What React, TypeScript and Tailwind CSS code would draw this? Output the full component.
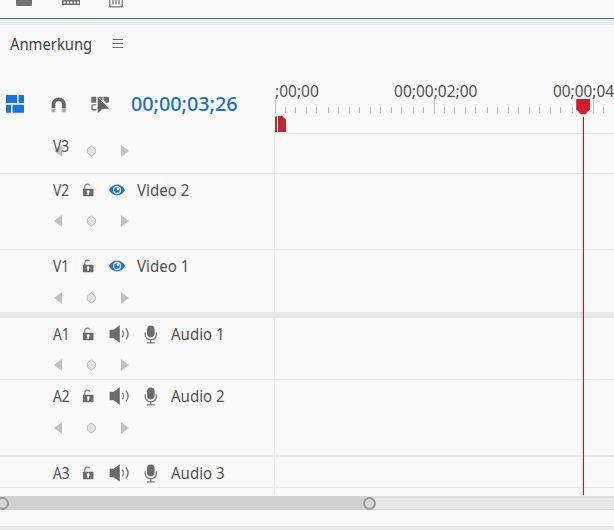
import clsx from "clsx";

const FONT = "font-['Noto_Sans','Open_Sans',sans-serif]";

// distance to the next tick over one two second span
const TICK_GAPS = [10, 10, 11, 10, 12, 10, 11, 10, 11, 10, 11, 10, 12, 10, 11];
const TICKS = [...TICK_GAPS, ...TICK_GAPS, 10, 11];

type Track = {
  id: string;
  name?: string;
  kind: "video" | "audio";
  row: string;
  keys?: string;
};

const TRACKS: Track[] = [
  { id: "V3", kind: "video", row: "h-10 border-b", keys: "-mt-[13px]" },
  { id: "V2", name: "Video 2", kind: "video", row: "h-[76px] border-b", keys: "mt-[9px]" },
  { id: "V1", name: "Video 1", kind: "video", row: "h-[68px] border-b-[6px]", keys: "mt-[10px]" },
  { id: "A1", name: "Audio 1", kind: "audio", row: "h-[62px] border-b", keys: "mt-[9px]" },
  { id: "A2", name: "Audio 2", kind: "audio", row: "h-[77px] border-b-2", keys: "mt-[10px]" },
  { id: "A3", name: "Audio 3", kind: "audio", row: "h-[31px] border-b" },
];

function LockIcon() {
  return (
    <svg width="12" height="14" viewBox="0 0 12 14" className="shrink-0">
      <path d="M2.8 6V3.8a2.6 2.6 0 0 1 4.9-1.3" fill="none" stroke="#808080" strokeWidth="1.3" />
      <rect x="0.9" y="5.7" width="10.6" height="7.6" rx="0.8" fill="#6c6c6c" />
      <path d="M6.2 7.2a1.4 1.4 0 0 1 .8 2.6V12H5.4V9.8a1.4 1.4 0 0 1 .8-2.6z" fill="#fafafa" />
    </svg>
  );
}

function EyeIcon() {
  return (
    <svg width="16" height="12" viewBox="0 0 16 12" className="shrink-0">
      <path d="M0 6C1.8 2.6 4.7.6 8 .6S14.2 2.6 16 6c-1.8 3.4-4.7 5.4-8 5.4S1.8 9.4 0 6z" fill="#1b74d8" />
      <circle cx="8" cy="6" r="3.5" fill="none" stroke="#fafafa" strokeWidth="1.3" />
      <circle cx="9" cy="5" r="1.2" fill="#fafafa" />
    </svg>
  );
}

function SpeakerIcon() {
  return (
    <svg width="21" height="18" viewBox="0 0 21 18" className="shrink-0">
      <path d="M.6 4.8h4L10.8.2v17.6l-6.2-4.6h-4z" fill="#6b6b6b" />
      <path d="M13.2 5.8c1.7 1.8 1.7 4.6 0 6.4M16.8 3.4c3 3.2 3 8 0 11.2" fill="none" stroke="#7a7a7a" strokeWidth="1.4" />
    </svg>
  );
}

function MicIcon() {
  return (
    <svg width="13" height="19" viewBox="0 0 13 19" className="shrink-0">
      <rect x="3" y="0.4" width="7.6" height="12" rx="3.8" fill="#6b6b6b" />
      <path d="M1.2 7.2v2.3c0 3 2.2 5.2 5.6 5.2s5.5-2.2 5.5-5.2V7.2M6.8 14.7v3M2.8 17.8h8" fill="none" stroke="#7a7a7a" strokeWidth="1.3" />
    </svg>
  );
}

function Keyframes({ className }: { className?: string }) {
  return (
    <div className={clsx("flex h-3 items-center pl-[54px]", className)}>
      <svg width="8" height="12" viewBox="0 0 8 12">
        <path d="M8 0v12L0 6z" fill="#c1c1c1" />
      </svg>
      <svg width="10" height="12" viewBox="0 0 10 12" className="ml-6">
        <path d="M5.3.9 9.3 4v4l-4 3.1L1.3 8V4z" fill="#e3e3e3" stroke="#bcbcbc" />
      </svg>
      <svg width="8" height="12" viewBox="0 0 8 12" className="ml-[25px]">
        <path d="M0 0v12l8-6z" fill="#c1c1c1" />
      </svg>
    </div>
  );
}

function TrackRow({ track }: { track: Track }) {
  const audio = track.kind === "audio";
  return (
    <div className={clsx("flex shrink-0 border-[#e8e8e8]", track.row)}>
      <div className="w-[275px] border-r border-[#e4e4e4]">
        <div className={clsx("flex items-center pl-[53px]", track.name ? "h-8" : "h-6")}>
          <span className="-mt-px w-[29px] shrink-0 origin-left scale-x-[0.89] text-[15.5px] leading-5">{track.id}</span>
          {track.name && (
            <>
              <LockIcon />
              {audio ? (
                <div className="ml-[15px] flex w-[62px] shrink-0 items-center gap-[14px]">
                  <SpeakerIcon />
                  <MicIcon />
                </div>
              ) : (
                <div className="ml-[15px] w-7 shrink-0">
                  <EyeIcon />
                </div>
              )}
              <span className="origin-left scale-x-[0.94] text-base leading-5 whitespace-nowrap">{track.name}</span>
            </>
          )}
        </div>
        {track.keys && <Keyframes className={track.keys} />}
      </div>
    </div>
  );
}

function Toolbar() {
  return (
    <div className="flex h-[19px] items-start border-b border-[#2f6fb8] pl-4">
      <svg width="16" height="6" viewBox="0 0 16 6">
        <path d="M0 0h16v5a1 1 0 0 1-1 1H1a1 1 0 0 1-1-1z" fill="#727272" />
      </svg>
      <svg width="18" height="5" viewBox="0 0 18 5" className="ml-[30px]">
        <path d="M0 0h18v5H0z" fill="#727272" />
        <path d="M1.5 1.6h2v2h-2zM5 1.6h2v2H5zM8.3 1.6h2v2h-2zM11.6 1.6h2v2h-2zM15 1.6h2v2h-2z" fill="#fafafa" />
      </svg>
      <svg width="14" height="8" viewBox="0 0 14 8" className="ml-[29px]">
        <path d="M.7 0v5.8a1 1 0 0 0 1 1h10.6a1 1 0 0 0 1-1V0M4 0v4.5M7 0v4.5M10 0v4.5" fill="none" stroke="#727272" strokeWidth="1.3" />
      </svg>
    </div>
  );
}

function SequenceTools() {
  return (
    <div className="flex h-[68px] w-[275px] shrink-0 items-start pt-5 pl-[6px]">
      <svg width="18" height="18" viewBox="0 0 18 18" className="mt-[9px]" fill="#1473e6">
        <rect x="0" y="0" width="11.2" height="8" rx=".6" />
        <rect x="12.6" y="0" width="5.4" height="8" rx=".6" />
        <rect x="0" y="9.8" width="5" height="8" rx=".6" />
        <rect x="6.5" y="9.8" width="11.5" height="8" rx=".6" />
      </svg>
      <svg width="16" height="16" viewBox="0 0 16 16" className="mt-[11px] ml-[27px]">
        <path d="M2.5 11V7.6a5 5 0 0 1 10.4 0V11" fill="none" stroke="#666" strokeWidth="3.8" />
        <path d="M2.5 11.2v4M12.9 11.2v4" stroke="#a9a9a9" strokeWidth="3.8" />
      </svg>
      <svg width="19" height="18" viewBox="0 0 19 18" className="mt-[10px] ml-6">
        <path d="M.3 1.7a1 1 0 0 1 1-1h4v6h-5zM12.4.7H17a1 1 0 0 1 1 1v4a1 1 0 0 1-1 1h-2.2l-2.4-2.6z" fill="#6b6b6b" />
        <path d="M5.2 8.9H1.9a.9.9 0 0 0-.9.9v3.1a.9.9 0 0 0 .9.9h3.3" fill="none" stroke="#6b6b6b" strokeWidth="1.4" />
        <path d="M6.7.7 18 12.8h-6.3l-5 4.4z" fill="#626262" />
        <path d="M7.2.7h4.3v4.4z" fill="#6b6b6b" />
      </svg>
      <span className="mt-[6px] ml-[21px] origin-left scale-x-[1.04] text-[19px] leading-6 font-medium whitespace-nowrap text-[#1670ce]">
        00;00;03;26
      </span>
    </div>
  );
}

function Ruler() {
  return (
    <div className="flex w-[339px] flex-col pt-[15px]">
      <div className="flex h-5 shrink-0 text-base leading-5 whitespace-nowrap text-[#505050]">
        <span className="w-[119px] shrink-0 origin-left scale-x-[0.97]">;00;00</span>
        <span className="w-[159px] shrink-0 origin-left scale-x-[0.97]">00;00;02;00</span>
        <span className="w-[61px] shrink-0 origin-left scale-x-[0.96]">00;00;04</span>
      </div>
      <div className="-mt-px flex h-[13px] shrink-0 items-end">
        {TICKS.map((gap, i) => (
          <i
            key={i}
            className={clsx("shrink-0 border-l border-[#bcbcbc]", i % 15 === 0 ? "h-[13px]" : "h-[6px]")}
            style={{ width: gap }}
          />
        ))}
      </div>
      <svg width="12" height="16" viewBox="0 0 12 16" className="mt-[3px] shrink-0">
        <path d="M0 .8 2 0v16H0zM3 0h4.2L11 3.8V16H3z" fill="#be2730" />
      </svg>
    </div>
  );
}

function Playhead() {
  return (
    <svg width="15" height="396" viewBox="0 0 15 396" className="absolute top-[99px] left-[576px]">
      <path d="M.2 0h13.8v10.2L9.4 15.3H4.8L.2 10.2z" fill="#cb202b" />
      <rect x="7" y="18" width="1" height="378" fill="#a8242c" />
      <rect x="6" y="18" width="1" height="378" fill="#a8242c" opacity="0.15" />
    </svg>
  );
}

function Scrollbar() {
  return (
    <div className="mt-2 flex h-[14px] shrink-0 items-center border-t-2 border-b border-t-[#dedede] border-b-[#d0d0d0] bg-[#e8e8e8]">
      <div className="-mt-[2px] -mb-px flex h-[14px] w-[376px] shrink-0 items-center justify-between bg-gradient-to-r from-[#d1d1d1] from-[370px] to-transparent to-[370px]">
        <div className="-ml-[4px] size-[13px] rounded-full border-[2.5px] border-[#999] bg-[#d6d6d6]" />
        <div className="size-[13px] rounded-full border-[2.5px] border-[#999] bg-[#d6d6d6]" />
      </div>
    </div>
  );
}

export default function App() {
  return (
    <div className={clsx("relative flex h-[530px] w-[614px] flex-col overflow-hidden bg-[#fafafa] text-[#505050]", FONT)}>
      <Toolbar />
      <div className="h-[6px] shrink-0 bg-[#ebebeb]" />
      <div className="flex h-[41px] shrink-0 items-center pb-[4px] pl-[10px]">
        <span className="w-[103px] origin-left scale-x-[0.925] text-base leading-5 text-[#404040]">Anmerkung</span>
        <svg width="10" height="10" viewBox="0 0 10 10">
          <path d="M0 .5h10M0 4.5h10M0 8.5h10" stroke="#6e6e6e" />
        </svg>
      </div>
      <div className="flex h-[68px] shrink-0">
        <SequenceTools />
        <Ruler />
      </div>
      <div className="flex flex-col">
        <div className="-mt-px ml-[275px] h-px shrink-0 bg-[#e8e8e8]" />
        {TRACKS.map((track) => (
          <TrackRow key={track.id} track={track} />
        ))}
        <div className="h-[7px] w-[275px] shrink-0 border-r border-[#e4e4e4]" />
      </div>
      <div className="-mt-[7px] flex flex-col">
        <Scrollbar />
      </div>
      <div className="mt-auto h-1 shrink-0 bg-[#ebebeb]" />
      <Playhead />
    </div>
  );
}
